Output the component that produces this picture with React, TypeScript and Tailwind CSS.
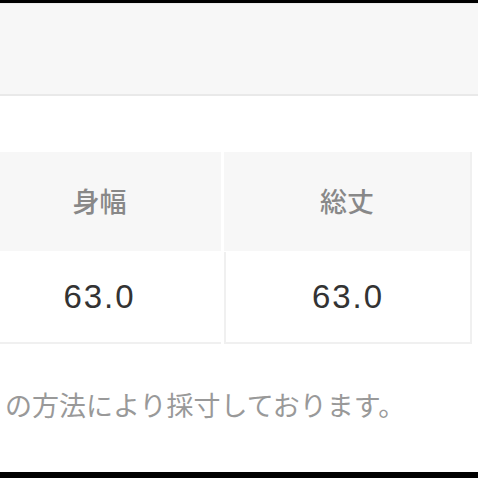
export default function App() {
  const jp = { fontFamily: '"Noto Sans CJK JP", "Noto Sans", sans-serif' };
  const num = { fontFamily: '"Liberation Sans", Arial, sans-serif' };
  return (
    <div className="w-[478px] h-[478px] bg-white flex flex-col overflow-hidden relative">
      <div className="h-[3px] bg-black shrink-0" />
      <div className="h-[1px] bg-[#ececec] shrink-0" />
      <div className="h-[92px] bg-[#f7f7f7] border-b-2 border-[#e9e9e9] shrink-0" />
      <div className="h-[56px] shrink-0" />
      <div className="flex gap-[3px] w-[472px] shrink-0">
        <div className="flex-[222] flex flex-col gap-[1px]">
          <div className="h-[99px] bg-[#f7f7f7] flex items-center justify-center pr-[22px] text-[27px] text-[#888] font-medium" style={jp}>身幅</div>
          <div className="h-[92px] bg-white border-b-2 border-[#f0f0f0] flex items-center justify-center pr-[22px] text-[33px] text-[#333] tracking-[2px]" style={num}>63.0</div>
        </div>
        <div className="flex-[247] flex flex-col gap-[1px] border-r-2 border-[#f0f0f0]">
          <div className="h-[99px] bg-[#f7f7f7] flex items-center justify-center text-[27px] text-[#888] font-medium" style={jp}>総丈</div>
          <div className="h-[92px] bg-white border-b-2 border-l-2 border-[#f0f0f0] flex items-center justify-center text-[33px] text-[#333] tracking-[2px]" style={num}>63.0</div>
        </div>
      </div>
      <div className="flex-1 flex items-center pl-[5px] pb-[6px]">
        <span className="text-[27px] text-[#999] whitespace-nowrap" style={jp}>の方法により採寸しております。</span>
      </div>
      <div className="h-[6px] bg-black shrink-0" />
    </div>
  );
}
